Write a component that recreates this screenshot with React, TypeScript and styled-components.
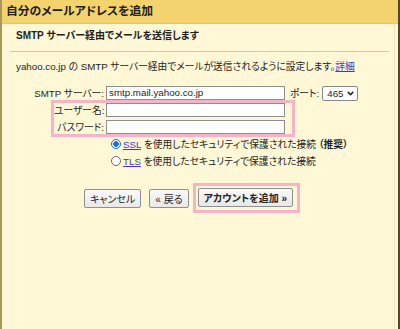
import styled, { createGlobalStyle } from "styled-components";

const GlobalStyle = createGlobalStyle`
  html, body {
    margin: 0;
    padding: 0;
    background: #fef8d7;
  }
  body {
    font-family: "Liberation Sans", "Noto Sans CJK JP", sans-serif;
    font-size: 9.75px;
    color: #1e1e1e;
  }
`;

const Dialog = styled.div`
  width: 400px;
  height: 329px;
  box-sizing: border-box;
  border-left: 2px solid #a8995a;
  border-right: 2px solid #51482a;
  background: #fef8d7;
  overflow: hidden;
  font-feature-settings: "palt";
`;

const Header = styled.h1`
  margin: 0;
  height: 23px;
  padding-left: 4px;
  background: #f4d36e;
  border-bottom: 1px solid #e6c662;
  font-size: 11.8px;
  font-weight: bold;
  line-height: 23px;
`;

const Panel = styled.div`
  margin-right: 3px;
  height: 305px;
  border-right: 1px solid #f3e6b6;
`;

const SectionTitle = styled.h2`
  margin: 0;
  padding: 1px 0 0 14px;
  font-size: 10px;
  font-weight: bold;
  line-height: 22px;
`;

const Divider = styled.hr`
  margin: 4px 5px 0 8px;
  border: 0;
  height: 1px;
  background: #e8c867;
`;

const Intro = styled.p`
  margin: 8px 0 0;
  padding-left: 14px;
  line-height: 14px;
`;

const Link = styled.a`
  color: #4a36c8;
  text-decoration: underline;
  cursor: pointer;
`;

const Form = styled.div`
  margin-top: 12px;
  display: flex;
  flex-direction: column;
`;

const Row = styled.div`
  display: flex;
  align-items: center;
  height: 14px;
`;

const Label = styled.label<{ $width: number }>`
  width: ${(p) => p.$width}px;
  box-sizing: border-box;
  padding-right: 2px;
  text-align: right;
  white-space: nowrap;
`;

const TextBox = styled.div`
  width: 179px;
  height: 14px;
  box-sizing: border-box;
  border: 1px solid #8e8e8e;
  background: #fff;
  padding-left: 2px;
  line-height: 12px;
  white-space: nowrap;
`;

const PortLabel = styled.span`
  margin-left: 5px;
`;

const Select = styled.div`
  margin-left: 3px;
  height: 15px;
  box-sizing: border-box;
  display: inline-flex;
  align-items: center;
  gap: 3px;
  padding: 0 3px 0 4px;
  border: 1px solid #8a8a8a;
  border-radius: 2px;
  background: #fff;
`;

const Highlight = styled.div`
  box-sizing: border-box;
  border: 3px solid #f6b4c8;
`;

const FieldGroup = styled(Highlight)`
  margin-left: 49px;
  width: 244px;
  display: flex;
  flex-direction: column;
  gap: 3px;
`;

const RadioGroup = styled.div`
  margin-left: 109px;
  display: flex;
  flex-direction: column;
  gap: 4px;
`;

const RadioRow = styled.div`
  display: flex;
  align-items: center;
  height: 13px;
  gap: 2px;
  white-space: nowrap;
`;

const RadioMark = styled.span<{ $checked?: boolean }>`
  width: 10px;
  height: 10px;
  box-sizing: border-box;
  border-radius: 50%;
  border: 1px solid ${(p) => (p.$checked ? "#1b6fd6" : "#6a6a6a")};
  background: ${(p) =>
    p.$checked ? "radial-gradient(circle, #1b6fd6 0 2.6px, #fff 3px)" : "#fff"};
`;

const Strong = styled.b`
  font-weight: bold;
`;

const Actions = styled.div`
  margin: 16px 0 0 82px;
  display: flex;
  align-items: center;
  gap: 8px;
`;

const ButtonFrame = styled(Highlight)`
  margin-left: -4px;
  padding: 2px 4px 3px 2px;
`;

const Button = styled.button<{ $bold?: boolean }>`
  height: 19px;
  box-sizing: border-box;
  padding: 0 5px;
  border: 1px solid #8f8f8f;
  border-radius: 2px;
  background: linear-gradient(#fafafa, #e8e8e8);
  font-family: inherit;
  font-size: 10px;
  font-weight: ${(p) => (p.$bold ? "bold" : "normal")};
  color: #1e1e1e;
  white-space: nowrap;
  font-feature-settings: "palt";
`;

const Chevron = () => (
  <svg width="7" height="5" viewBox="0 0 7 5">
    <polyline points="0.8,0.9 3.5,3.7 6.2,0.9" fill="none" stroke="#222" strokeWidth="1.6" />
  </svg>
);

const App = () => {
  return (
    <>
      <GlobalStyle />
      <Dialog>
        <Header>自分のメールアドレスを追加</Header>
        <Panel>
          <SectionTitle>SMTP サーバー経由でメールを送信します</SectionTitle>
          <Divider />
          <Intro>
            yahoo.co.jp の SMTP サーバー経由でメールが送信されるように設定します。
            <Link>詳細</Link>
          </Intro>
          <Form>
            <Row>
              <Label $width={104}>SMTP サーバー:</Label>
              <TextBox>smtp.mail.yahoo.co.jp</TextBox>
              <PortLabel>ポート:</PortLabel>
              <Select>
                465
                <Chevron />
              </Select>
            </Row>
            <FieldGroup>
              <Row>
                <Label $width={52}>ユーザー名:</Label>
                <TextBox />
              </Row>
              <Row>
                <Label $width={52}>パスワード:</Label>
                <TextBox />
              </Row>
            </FieldGroup>
            <RadioGroup>
              <RadioRow>
                <RadioMark $checked />
                <span>
                  <Link>SSL</Link> を使用したセキュリティで保護された接続 <Strong>（推奨）</Strong>
                </span>
              </RadioRow>
              <RadioRow>
                <RadioMark />
                <span>
                  <Link>TLS</Link> を使用したセキュリティで保護された接続
                </span>
              </RadioRow>
            </RadioGroup>
          </Form>
          <Actions>
            <Button>キャンセル</Button>
            <Button>« 戻る</Button>
            <ButtonFrame>
              <Button $bold>アカウントを追加 »</Button>
            </ButtonFrame>
          </Actions>
        </Panel>
      </Dialog>
    </>
  );
};

export default App;
